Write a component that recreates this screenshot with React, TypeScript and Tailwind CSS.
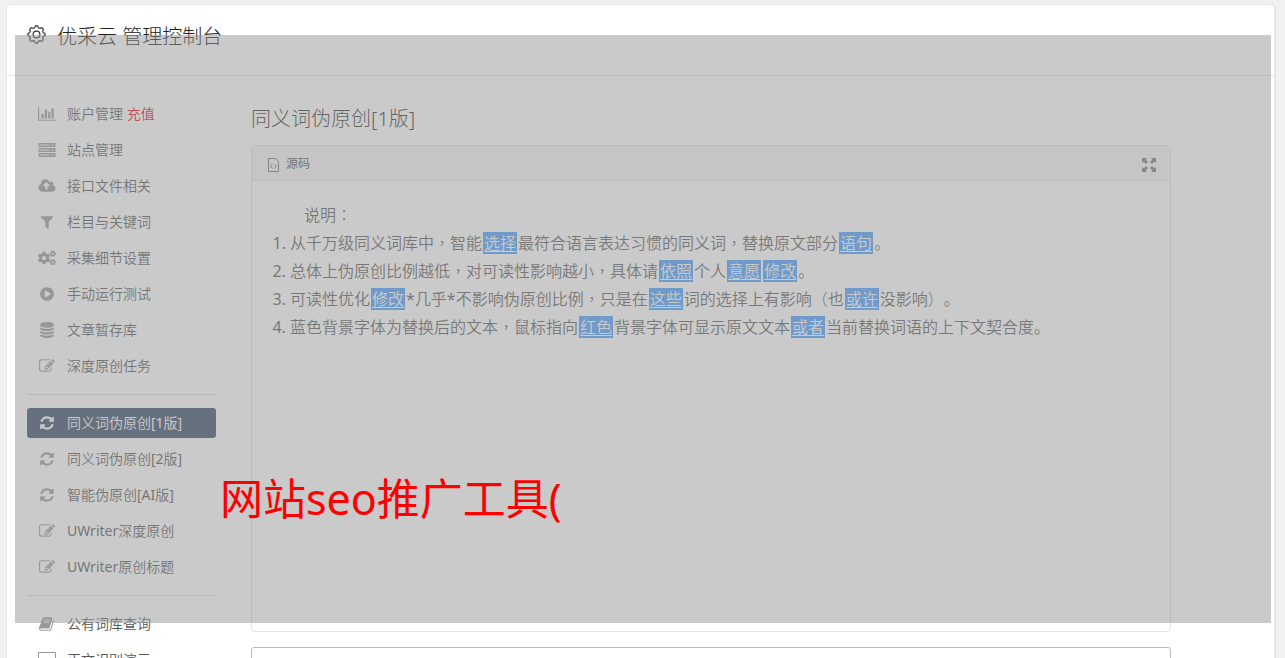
import type { ReactNode } from 'react';
import { FaCogs } from 'react-icons/fa';

const glyphs = {
  chart: {
    box: '0 0 2048 1792',
    d: 'M640 896v512h-256v-512h256zm384-512v1024h-256v-1024h256zm1024 1152v128h-2048v-1536h128v1408h1920zm-640-896v768h-256v-768h256zm384-384v1152h-256v-1152h256z',
  },
  server: {
    box: '0 0 17 16',
    d: 'M0 1h17v4H0zM1 2.500v1h10v-1zM0 6h17v4H0zM1 7.500v1h10v-1zM0 11h17v4H0zM1 12.500v1h10v-1zM13 2.500v1h2v-1zM13 7.500v1h2v-1zM13 12.500v1h2v-1z',
  },
  upload: {
    box: '-64 0 1920 1792',
    d: 'M1216 864q0-14-9-23l-352-352q-9-9-23-9t-23 9l-351 351q-10 12-10 24 0 14 9 23t23 9h224v352q0 13 9.5 22.5t22.5 9.5h192q13 0 22.5-9.5t9.5-22.5v-352h224q13 0 22.5-9.5t9.5-22.5zm640 288q0 159-112.5 271.5t-271.5 112.5h-1088q-185 0-316.5-131.5t-131.5-316.5q0-130 70-240t188-165q-2-30-2-43 0-212 150-362t362-150q156 0 285.5 87t188.5 231q71-62 166-62 106 0 181 75t75 181q0 76-41 138 130 31 213.5 135.5t83.5 238.5z',
  },
  filter: {
    box: '0 0 1792 1792',
    d: 'M1595 295q17 41-14 70l-493 493v742q0 42-39 59-13 5-25 5-27 0-45-19l-256-256q-19-19-19-45v-486l-493-493q-31-29-14-70 17-39 59-39h1280q42 0 59 39z',
  },
  play: {
    box: '0 0 1792 1792',
    d: 'M896 128q209 0 385.5 103t279.5 279.5 103 385.5-103 385.5-279.5 279.5-385.5 103-385.5-103-279.5-279.5-103-385.5 103-385.5 279.5-279.5 385.5-103zm384 823q32-18 32-55t-32-55l-544-320q-31-19-64-1-32 19-32 56v640q0 37 32 56 16 8 32 8 17 0 32-9z',
  },
  database: {
    box: '0 0 1792 1792',
    d: 'M896 768q237 0 443-43t325-127v170q0 69-103 128t-280 93.5-385 34.5-385-34.5-280-93.5-103-128v-170q119 84 325 127t443 43zm0 768q237 0 443-43t325-127v170q0 69-103 128t-280 93.5-385 34.5-385-34.5-280-93.5-103-128v-170q119 84 325 127t443 43zm0-384q237 0 443-43t325-127v170q0 69-103 128t-280 93.5-385 34.5-385-34.5-280-93.5-103-128v-170q119 84 325 127t443 43zm0-1152q208 0 385 34.5t280 93.5 103 128v128q0 69-103 128t-280 93.5-385 34.5-385-34.5-280-93.5-103-128v-128q0-69 103-128t280-93.5 385-34.5z',
  },
  edit: {
    box: '0 0 1792 1792',
    d: 'M888 1184l116-116-152-152-116 116v56h96v96h56zm440-720q-16-16-33 1l-350 350q-17 17-1 33t33-1l350-350q17-17 1-33zm80 594v190q0 119-84.5 203.5t-203.5 84.5h-832q-119 0-203.5-84.5t-84.5-203.5v-832q0-119 84.5-203.5t203.5-84.5h832q63 0 117 25 15 7 18 23 3 17-9 29l-49 49q-14 14-32 8-23-6-45-6h-832q-66 0-113 47t-47 113v832q0 66 47 113t113 47h832q66 0 113-47t47-113v-126q0-13 9-22l64-64q15-15 35-7t20 29zm-96-738l288 288-672 672h-288v-288zm444 132l-92 92-288-288 92-92q28-28 68-28t68 28l152 152q28 28 28 68t-28 68z',
  },
  refresh: {
    box: '-128 -128 1792 1792',
    d: 'M1511 928q0 5-1 7-64 268-268 434.5t-478 166.5q-146 0-282.5-55t-243.5-157l-129 129q-19 19-45 19t-45-19-19-45v-448q0-26 19-45t45-19h448q26 0 45 19t19 45-19 45l-137 137q71 66 161 102t187 36q134 0 250-65t186-179q11-17 53-117 8-23 30-23h192q13 0 22.5 9.5t9.5 22.5zm25-800v448q0 26-19 45t-45 19h-448q-26 0-45-19t-19-45 19-45l138-138q-148-137-349-137-134 0-250 65t-186 179q-11 17-53 117-8 23-30 23h-199q-13 0-22.5-9.5t-9.5-22.5v-7q65-268 270-434.5t480-166.5q146 0 284 55.5t245 156.5l130-129q19-19 45-19t45 19 19 45z',
  },
  book: {
    box: '0 0 1792 1792',
    d: 'M1639 478q40 57 18 129l-275 906q-19 64-76.5 107.5t-122.5 43.5h-923q-77 0-148.5-53.5t-99.5-131.5q-24-67-2-127 0-4 3-27t4-37q1-8-3-21.5t-3-19.5q2-11 8-21t16.5-23.5 16.5-23.5q23-38 45-91.5t30-91.5q3-10 .5-30t-.5-28q3-11 17-28t17-23q21-36 42-92t25-90q1-9-2.5-32t.5-28q4-13 22-30.5t22-22.5q19-26 42.5-84.5t27.5-96.5q1-8-3-25.5t-2-26.5q2-8 9-18t18-23 17-21q8-12 16.5-30.5t15-35 16-36 19.5-32 26.5-23.5 36-11.5 47.5 5.5l-1 3q38-9 51-9h761q74 0 114 56t18 130l-274 906q-36 119-71.5 153.5t-128.5 34.5h-869q-27 0-38 15-11 16-1 43 24 70 144 70h923q29 0 56-15.5t35-41.5l300-987q7-22 5-57 38 15 59 43zm-1064 2q-4 13 2 22.5t20 9.5h608q13 0 25.5-9.5t16.5-22.5l21-64q4-13-2-22.5t-20-9.5h-608q-13 0-25.5 9.5t-16.5 22.5zm-83 256q-4 13 2 22.5t20 9.5h608q13 0 25.5-9.5t16.5-22.5l21-64q4-13-2-22.5t-20-9.5h-608q-13 0-25.5 9.5t-16.5 22.5z',
  },
  laptop: {
    box: '0 0 18 16',
    d: 'M1 0h16q1 0 1 1v11q0 1-1 1h-6v2h2v1H5v-1h2v-2H1q-1 0-1-1V1q0-1 1-1zM1 1v11h16V1z',
  },
};

type GlyphName = keyof typeof glyphs;

function Glyph({ name }: { name: GlyphName }) {
  return (
    <svg viewBox={glyphs[name].box} className="h-4 w-[18px]" fill="currentColor" fillRule="evenodd" aria-hidden="true">
      <path d={glyphs[name].d} />
    </svg>
  );
}

type Item = { label: string; icon: GlyphName | 'cogs'; extra?: string; active?: boolean };

const groups: Item[][] = [
  [
    { label: '账户管理', icon: 'chart', extra: '充值' },
    { label: '站点管理', icon: 'server' },
    { label: '接口文件相关', icon: 'upload' },
    { label: '栏目与关键词', icon: 'filter' },
    { label: '采集细节设置', icon: 'cogs' },
    { label: '手动运行测试', icon: 'play' },
    { label: '文章暂存库', icon: 'database' },
    { label: '深度原创任务', icon: 'edit' },
  ],
  [
    { label: '同义词伪原创[1版]', icon: 'refresh', active: true },
    { label: '同义词伪原创[2版]', icon: 'refresh' },
    { label: '智能伪原创[AI版]', icon: 'refresh' },
    { label: 'UWriter深度原创', icon: 'edit' },
    { label: 'UWriter原创标题', icon: 'edit' },
  ],
  [
    { label: '公有词库查询', icon: 'book' },
    { label: '正文识别演示', icon: 'laptop' },
  ],
];

function NavItem({ item }: { item: Item }) {
  return (
    <li>
      <a
        href="#"
        className={`flex h-[30px] items-center gap-[11px] rounded-[3px] pl-[11px] text-sm ${
          item.active ? 'bg-[#384a68] text-white' : 'text-[#555]'
        }`}
      >
        <span className={`flex w-[18px] justify-center ${item.active ? '' : 'text-[#999]'}`}>
          {item.icon === 'cogs' ? <FaCogs size={18} /> : <Glyph name={item.icon} />}
        </span>
        <span className="whitespace-nowrap">
          {item.label}
          {item.extra && <span className="text-[#f00010]"> {item.extra}</span>}
        </span>
      </a>
    </li>
  );
}

// word that was swapped for a synonym
function Swap({ children }: { children: ReactNode }) {
  return (
    <span className="mx-px bg-[#489efe] px-px text-white underline underline-offset-2">{children}</span>
  );
}

// punctuation that sits in the middle of its cell
function Mid({ children }: { children: ReactNode }) {
  return <span className="font-['Noto_Sans_CJK_TC',sans-serif] leading-none font-light">{children}</span>;
}

function GearIcon() {
  const points: string[] = [];
  for (let i = 0; i <= 96; i++) {
    const a = (i / 96) * Math.PI * 2;
    const wave = Math.max(-1, Math.min(1, 1.8 * Math.cos(8 * a)));
    const r = 7.8 + 0.8 * wave;
    points.push(`${(9.5 + r * Math.cos(a)).toFixed(2)},${(9.5 + r * Math.sin(a)).toFixed(2)}`);
  }
  return (
    <svg viewBox="0 0 19 19" className="size-[19px]" fill="none" stroke="#333" strokeWidth="1.2" aria-hidden="true">
      <polygon points={points.join(' ')} />
      <circle cx="9.5" cy="9.5" r="3.4" />
    </svg>
  );
}

export default function App() {
  return (
    <div className="relative h-screen overflow-hidden bg-[#f1f1f1] pt-[5px] pr-[11px] pl-[7px] font-['Noto_Sans','Noto_Sans_CJK_SC_DemiLight','Noto_Sans_CJK_SC',sans-serif] text-[#333] [text-spacing-trim:space-all]">
      <div className="min-h-screen rounded-t bg-white shadow-[0_0_0_1px_#e6e6e6,1px_0_0_1px_#e6e6e6]">
        <header className="flex h-[71px] items-start gap-[11px] border-b border-[#e4e4e4] pt-[17px] pl-5">
          <span className="flex h-6 items-center">
            <GearIcon />
          </span>
          <h1 className="font-['Noto_Sans','Noto_Sans_CJK_SC',sans-serif] text-xl leading-[30px] font-light text-[#222]">
            优采云 管理控制台
          </h1>
        </header>

        <div className="flex gap-[35px] pt-[23px] pl-5">
          <nav className="w-[189px] shrink-0">
            {groups.map((group, i) => (
              <ul key={i} className={`flex flex-col gap-1.5 ${i > 0 ? 'mt-[13px] border-t border-[#ddd] pt-[13px]' : ''}`}>
                {group.map((item) => (
                  <NavItem key={item.label} item={item} />
                ))}
              </ul>
            ))}
          </nav>

          <main className="max-w-[920px] flex-1 pt-[5px]">
            <h2 className="font-['Noto_Sans','Noto_Sans_CJK_SC',sans-serif] text-xl leading-[30px] font-light">
              同义词伪原创[1版]
            </h2>

            {/* Editor */}
            <section className="mt-[11px] rounded border border-[#e2e2e2]">
              <div className="flex h-[35px] items-center justify-between border-b border-[#e2e2e2] bg-[#f5f5f5] pr-[14px] pl-4">
                <button type="button" className="flex items-center gap-[7px] pt-0.5 text-xs text-[#444]">
                  <svg viewBox="0 0 11 14" className="mt-0.5 h-[14px] w-[11px]" fill="none" stroke="#777" aria-hidden="true">
                    <path d="M.5.5h7l3 3v10H.5zM4.500 6 2.500 8.300l2 2.200M6.500 6l2 2.300-2 2.200" />
                  </svg>
                  源码
                </button>
                <button type="button" aria-label="全屏">
                  <svg viewBox="0 0 14 14" className="mt-1 size-[14px]" fill="#777" aria-hidden="true">
                    <path d="M0 0h5L3.500 1.500 6 4 4 6 1.500 3.500 0 5zM14 0v5l-1.500-1.500L10 6 8 4l2.500-2.500L9 0zM0 14V9l1.500 1.500L4 8l2 2-2.500 2.500L5 14zM14 14H9l1.500-1.500L8 10l2-2 2.500 2.500L14 9z" />
                  </svg>
                </button>
              </div>
              <div className="h-[450px] px-5 pt-5 text-base leading-7 text-[#5a5a5a]">
                <p className="indent-8">
                  说明<Mid>：</Mid>
                </p>
                <ol className="list-decimal pl-[18px]">
                  <li className="h-7">
                    从千万级同义词库中<Mid>，</Mid>智能<Swap>选择</Swap>最符合语言表达习惯的同义词<Mid>，</Mid>替换原文部分<Swap>语句</Swap>。
                  </li>
                  <li className="h-7">
                    总体上伪原创比例越低<Mid>，</Mid>对可读性影响越小<Mid>，</Mid>具体请<Swap>依照</Swap>个人<Swap>意愿</Swap><Swap>修改</Swap>。
                  </li>
                  <li className="h-7">
                    可读性优化<Swap>修改</Swap>*几乎*不影响伪原创比例<Mid>，</Mid>只是在<Swap>这些</Swap>词的选择上有影响<Mid>（</Mid>也<Swap>或许</Swap>没影响<Mid>）</Mid>。
                  </li>
                  <li className="h-7">
                    蓝色背景字体为替换后的文本<Mid>，</Mid>鼠标指向<Swap>红色</Swap>背景字体可显示原文文本<Swap>或者</Swap>当前替换词语的上下文契合度。
                  </li>
                </ol>
              </div>
            </section>

            <textarea aria-label="原文" className="mt-[15px] block h-40 w-full resize-none rounded-[3px] border border-[#bbb]" />
          </main>
        </div>
      </div>

      {/* Caption overlay */}
      <div className="pointer-events-none absolute top-[35px] right-[14px] bottom-[35px] left-[15px] flex items-end bg-[#969696]/50 pb-[92px] pl-[205px]">
        <p className="font-['Noto_Sans','Noto_Sans_CJK_SC',sans-serif] text-[43px] leading-[64px] whitespace-nowrap text-[#f00]">
          网站seo推广工具(
        </p>
      </div>
    </div>
  );
}
